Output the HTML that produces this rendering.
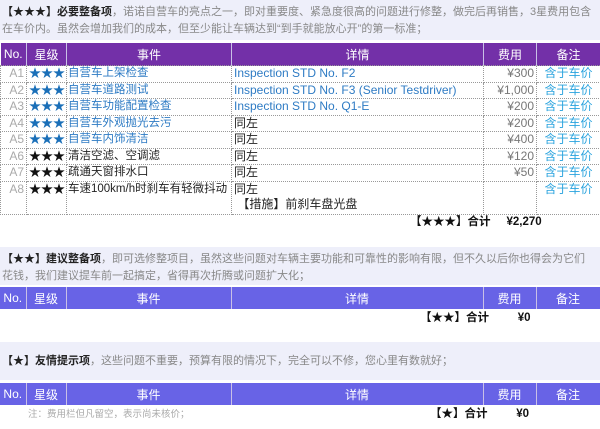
<!DOCTYPE html><html><head><meta charset="utf-8"><style>
body{margin:0;width:600px;height:429px;background:#fff;font-family:"Liberation Sans","Noto Sans CJK SC",sans-serif;font-size:11.5px;position:relative;overflow:hidden;color:#222}
.box{position:absolute;left:0;width:600px;background:#eeeffa;color:#888;line-height:17px;padding:4px 5px 4px 2px;box-sizing:border-box;font-size:11px}
.box b{color:#222}
table{position:absolute;left:0;width:600px;border-collapse:collapse;table-layout:fixed}
th{color:#fff;font-weight:normal;height:22px;border-right:1px solid #c9c0e6;font-size:12px;padding:0}
td{border:1px dotted #999;height:15.5px;padding:0 2px;white-space:nowrap;overflow:hidden;line-height:15px;font-size:12px}
td.e{font-size:11.5px;padding:0 1px}
.p th{background:#7330a8}.b th{background:#6863e6}
.n{color:#aaa;text-align:right}.s{text-align:center;color:#1a6fb8}.k{color:#111}
.l{color:#2e7bc4}.f{text-align:right;color:#777}.r{text-align:center;color:#2aa3de}
.tot{position:absolute;font-weight:bold;color:#111;font-size:11.5px}
</style></head><body>
<div class="box" style="top:0;height:40px"><b>【★★★】必要整备项</b>，诺诺自营车的亮点之一，即对重要度、紧急度很高的问题进行修整，做完后再销售，3星费用包含在车价内。虽然会增加我们的成本，但至少能让车辆达到“到手就能放心开”的第一标准；</div>
<table class="p" style="top:43px">
<col style="width:26px"><col style="width:40px"><col style="width:165px"><col style="width:252px"><col style="width:53px"><col style="width:64px">
<tr><th>No.</th><th>星级</th><th>事件</th><th>详情</th><th>费用</th><th>备注</th></tr>
<tr><td class="n">A1</td><td class="s">★★★</td><td class="l e">自营车上架检查</td><td class="l">Inspection STD No. F2</td><td class="f">¥300</td><td class="r">含于车价</td></tr>
<tr><td class="n">A2</td><td class="s">★★★</td><td class="l e">自营车道路测试</td><td class="l">Inspection STD No. F3 (Senior Testdriver)</td><td class="f">¥1,000</td><td class="r">含于车价</td></tr>
<tr><td class="n">A3</td><td class="s">★★★</td><td class="l e">自营车功能配置检查</td><td class="l">Inspection STD No. Q1-E</td><td class="f">¥200</td><td class="r">含于车价</td></tr>
<tr><td class="n">A4</td><td class="s">★★★</td><td class="l e">自营车外观抛光去污</td><td>同左</td><td class="f">¥200</td><td class="r">含于车价</td></tr>
<tr><td class="n">A5</td><td class="s">★★★</td><td class="l e">自营车内饰清洁</td><td>同左</td><td class="f">¥400</td><td class="r">含于车价</td></tr>
<tr><td class="n">A6</td><td class="s k">★★★</td><td class="e">清洁空滤、空调滤</td><td>同左</td><td class="f">¥120</td><td class="r">含于车价</td></tr>
<tr><td class="n">A7</td><td class="s k">★★★</td><td class="e">疏通天窗排水口</td><td>同左</td><td class="f">¥50</td><td class="r">含于车价</td></tr>
<tr><td class="n" style="vertical-align:top;height:32px">A8</td><td class="s k" style="vertical-align:top">★★★</td><td class="e" style="vertical-align:top">车速100km/h时刹车有轻微抖动</td><td style="vertical-align:top">同左<br>&nbsp;【措施】前刹车盘光盘</td><td></td><td class="r" style="vertical-align:top">含于车价</td></tr>
</table>
<div class="tot" style="top:213px;left:410px">【★★★】合计 &nbsp; &nbsp; ¥2,270</div>
<div class="box" style="top:247px;height:38px"><b>【★★】建议整备项</b>，即可选修整项目，虽然这些问题对车辆主要功能和可靠性的影响有限，但不久以后你也得会为它们花钱，我们建议提车前一起搞定，省得再次折腾或问题扩大化；</div>
<table class="b" style="top:287px">
<col style="width:26px"><col style="width:40px"><col style="width:165px"><col style="width:252px"><col style="width:53px"><col style="width:64px">
<tr><th>No.</th><th>星级</th><th>事件</th><th>详情</th><th>费用</th><th>备注</th></tr></table>
<div class="tot" style="top:309px;left:420px">【★★】合计 &nbsp; &nbsp; &nbsp; &nbsp; ¥0</div>
<div class="box" style="top:342px;height:38px;padding-top:11px"><b>【★】友情提示项</b>，这些问题不重要，预算有限的情况下，完全可以不修，您心里有数就好；</div>
<table class="b" style="top:383px">
<col style="width:26px"><col style="width:40px"><col style="width:165px"><col style="width:252px"><col style="width:53px"><col style="width:64px">
<tr><th>No.</th><th>星级</th><th>事件</th><th>详情</th><th>费用</th><th>备注</th></tr></table>
<div style="position:absolute;top:406px;left:28px;font-size:9.5px;color:#aaa">注：费用栏但凡留空，表示尚未核价；</div>
<div class="tot" style="top:405px;left:430px">【★】合计 &nbsp; &nbsp; &nbsp; &nbsp; ¥0</div>
</body></html>
